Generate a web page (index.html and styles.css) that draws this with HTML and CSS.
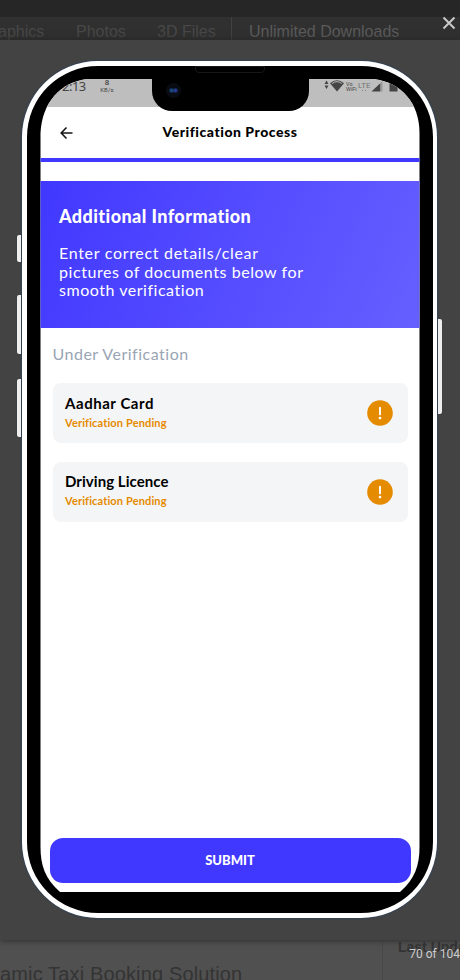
FILE: index.html
```html
<!DOCTYPE html>
<html lang="en">
<head>
<meta charset="utf-8">
<meta name="viewport" content="width=device-width, initial-scale=1">
<title>Verification Process</title>
<link rel="stylesheet" href="styles.css">
</head>
<body>
<header class="masthead"></header>
<nav class="site-nav">
  <span class="nav-graphics">aphics</span><span class="nav-photos">Photos</span><span class="nav-files">3D Files</span><span class="nav-unlimited">Unlimited Downloads</span>
</nav>
<main class="lightbox">
  <div class="phone">
    <i class="side-key key-mute"></i><i class="side-key key-up"></i><i class="side-key key-down"></i><i class="side-key key-power"></i>
    <div class="notch"><i class="speaker"></i><i class="camera"></i></div>
    <div class="screen">
      <div class="status">
        <span class="clock">2:13</span>
        <span class="rate"><b>8</b>KB/s</span>
        <svg class="status-icons" width="76" height="16" viewBox="0 0 76 16" fill="#444">
          <path d="M0.5 5 2.5 1.5 4.5 5zM0.5 6.500 2.500 10 4.500 6.500z"/>
          <path d="M6 4.200Q13-1.800 20 4.200L13 12.500z"/>
          <path d="M8.200 4.500Q13 .8 17.800 4.500" fill="none" stroke="#bebebe"/>
          <text x="22" y="7" class="tiny">Vo</text><text x="22" y="12.300" class="tiny">WiFi</text>
          <text x="34" y="8.800" class="lte">LTE</text>
          <path d="M38 11h1v1h-1zM41 11h1v1h-1z" fill="#888"/>
          <path d="M47.500 12.500 56.500 4v8.500z"/><path d="M56.500 4 58.500 2v10.500h-2z" fill="#999"/>
          <path d="M65.500 4h1.500v-2h5v2h1.500v8.500h-8z"/>
        </svg>
      </div>
      <header class="app-bar">
        <svg width="14" height="14" viewBox="0 0 14 14" fill="none" stroke="#161616" stroke-width="1.600"><path d="M12.500 7H1.600M6.500 1.500 1.200 7 6.500 12.500"/></svg>
        <h1>Verification Process</h1>
      </header>
      <section class="banner">
        <h2>Additional Information</h2>
        <p><span class="line-a">Enter correct details/clear</span><br><span class="line-b">pictures of documents below for</span><br><span class="line-c">smooth verification</span></p>
      </section>
      <h3>Under Verification</h3>
      <div class="cards">
        <article class="card">
          <div><h4 class="aadhar">Aadhar Card</h4><p>Verification Pending</p></div>
          <svg width="26" height="26" viewBox="0 0 26 26"><circle cx="13" cy="13" r="12.800" fill="#e58b00"/><path d="M13 7.700v6.700" stroke="#fff" stroke-width="1.900" stroke-linecap="round"/><circle cx="13" cy="18.100" r="1.350" fill="#fff"/></svg>
        </article>
        <article class="card">
          <div><h4 class="driving">Driving Licence</h4><p>Verification Pending</p></div>
          <svg width="26" height="26" viewBox="0 0 26 26"><circle cx="13" cy="13" r="12.800" fill="#e58b00"/><path d="M13 7.700v6.700" stroke="#fff" stroke-width="1.900" stroke-linecap="round"/><circle cx="13" cy="18.100" r="1.350" fill="#fff"/></svg>
        </article>
      </div>
      <button class="submit">SUBMIT</button>
    </div>
  </div>
</main>
<footer class="page-below">
  <h2 class="product">amic Taxi Booking Solution</h2>
  <aside>Last Update</aside>
</footer>
<svg class="close" width="14" height="14" viewBox="0 0 14 14" stroke="#c9c9c9" stroke-width="2"><path d="m1.500 1.500 11 11m0-11-11 11"/></svg>
<span class="counter">70 of 104</span>
</body>
</html>
```
FILE: styles.css
```css
* { box-sizing: border-box; }
body { margin: 0; width: 460px; height: 980px; overflow: hidden; position: relative; background: #505050; font-family: Lato, sans-serif; }
h1, h2, h3, h4, p { margin: 0; white-space: nowrap; }
i { display: block; }
.masthead { height: 17px; background: #262626; }
.site-nav { height: 23px; background: #303030; display: flex; color: #484848; font: 16px/29px "Liberation Sans", sans-serif; white-space: nowrap; overflow: hidden; }
.nav-graphics { width: 78px; margin-left: -2px; }
.nav-photos { width: 81px; }
.nav-files { width: 75px; border-right: 1px solid #424242; }
.nav-unlimited { padding-left: 17px; color: #5b5b5b; }
.lightbox { height: 900px; padding: 21px 0 0 22px; background: #434343; box-shadow: 0 0 7px #252525; position: relative; }
.phone { position: relative; width: 415px; height: 857px; padding: 13px 13px 21px; border: 5px solid #fff; border-right-width: 4px; border-radius: 76px; background: #000; box-shadow: 0 0 1px 1px #354355; }
.side-key { position: absolute; left: -10px; width: 4px; background: #eee; border-radius: 2px 0 0 2px; box-shadow: 0 0 1px #253146; }
.key-mute { top: 169px; height: 27px; }
.key-up { top: 229px; height: 59px; }
.key-down { top: 313px; height: 58px; }
.key-power { top: 253px; left: 411px; width: 3.500px; height: 95px; border-radius: 0 2px 2px 0; }
.notch { position: absolute; z-index: 2; left: 125px; top: 0; width: 157px; height: 45px; background: #000; border-radius: 0 0 20px 20px; }
.speaker { position: absolute; left: 43px; top: 0; width: 70px; height: 7px; border: 1px solid #171717; border-radius: 0 0 4px 4px; }
.camera { position: absolute; left: 14px; top: 17px; width: 15px; height: 15px; border-radius: 50%; background: radial-gradient(circle at 37% 50%, #174b80 0 1px, transparent 3px), radial-gradient(circle at 63% 50%, #283d95 0 1px, transparent 3px), #080b12; }
.screen { width: 380px; height: 813px; background: #fff; display: flex; flex-direction: column; clip-path: path("M47.500 0H333C361 3 379.500 24 379.500 54V768C379.500 786 375 800 360 813H20C5 800 .5 786 .5 768V54C2 23 21 3 47.500 0Z"); }
.status { height: 28px; flex: none; background: #bebebe; display: flex; color: #454545; }
.clock { width: 65px; padding-left: 22px; font: 13px/15px "Noto Sans", sans-serif; letter-spacing: -.5px; }
.rate { width: 28px; margin-left: -12px; text-align: center; font: 400 6px/6px Roboto, sans-serif; letter-spacing: .1px; }
.rate b { display: block; font-size: 8px; line-height: 8px; font-weight: 500; }
.status-icons { margin-left: 203px; }
.tiny { font: 5.500px Roboto, sans-serif; }
.lte { font: 8px Roboto, sans-serif; fill: #777; }
.app-bar { height: 55px; flex: none; padding: 0 20px; display: flex; align-items: center; border-bottom: 4px solid #4138ff; }
.app-bar h1 { margin: -2px 0 0 88.500px; font-size: 14px; line-height: 20px; font-weight: 900; letter-spacing: .53px; }
.banner { height: 147px; flex: none; margin-top: 19px; padding: 24px 19px; color: #fff; background: linear-gradient(112deg, #4138ff, #665fff); }
.banner h2 { font-size: 18px; line-height: 22px; font-weight: 900; letter-spacing: .42px; }
.banner p { margin-top: 17px; font-size: 16px; line-height: 18.500px; }
.line-a { letter-spacing: .69px; }
.line-b { letter-spacing: .57px; }
.line-c { letter-spacing: .53px; }
.screen h3 { margin: 16px 0 0 12.500px; font-size: 16px; line-height: 20px; font-weight: 400; letter-spacing: .5px; color: #9aa5b4; }
.cards { margin: 19px 12px 0 12.500px; display: grid; gap: 18.500px; }
.card { height: 60px; padding: 8px 15.500px 8px 12.500px; display: flex; align-items: center; justify-content: space-between; background: #f4f5f7; border-radius: 8px; }
.card h4 { font-size: 15px; line-height: 20px; font-weight: 700; }
.card p { margin-bottom: 2px; font-size: 11px; line-height: 19px; font-weight: 700; letter-spacing: .14px; color: #e58b00; }
.aadhar { letter-spacing: .55px; }
.driving { letter-spacing: .05px; }
.submit { margin: auto 9px 9px 9.500px; padding: 0 0 2px; width: 361px; height: 45px; flex: none; border: 0; border-radius: 13px; background: #4138ff; color: #fff; font: 900 13px Lato, sans-serif; }
.page-below { height: 40px; display: flex; color: #343434; font-family: "Liberation Sans", sans-serif; }
.product { width: 382px; padding-top: 22px; font-size: 20px; line-height: 24px; font-weight: 400; letter-spacing: .14px; }
.page-below aside { flex: 1; padding-left: 15px; border-left: 1px solid #494949; font-size: 14px; line-height: 14px; font-weight: 700; white-space: nowrap; overflow: hidden; }
.close { position: absolute; left: 442px; top: 16px; }
.counter { position: absolute; right: 0; top: 947px; color: #ccc; font: 12px/14px Roboto, sans-serif; }
```
